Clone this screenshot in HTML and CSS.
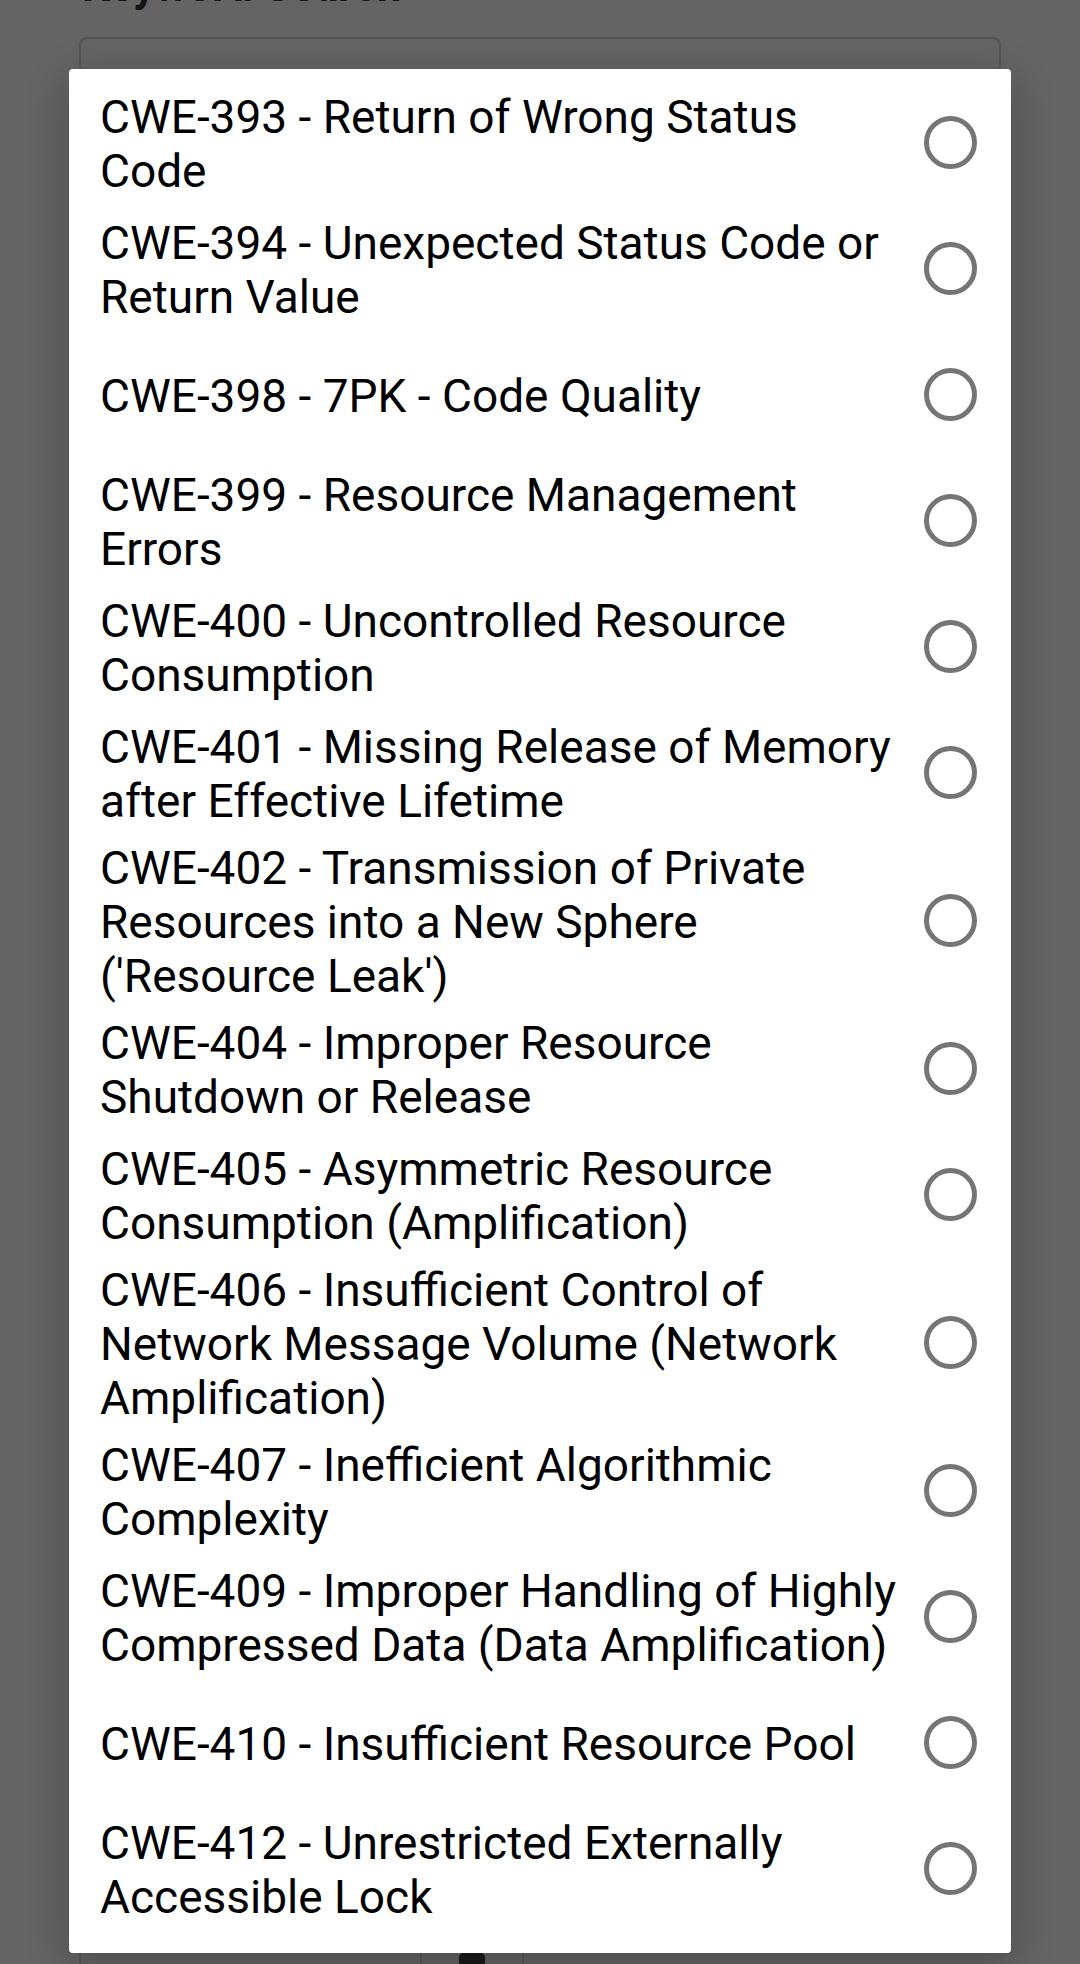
FILE: index.html
```html
<!DOCTYPE html>
<html>
<head>
<meta charset="utf-8">
<link rel="stylesheet" href="styles.css">
</head>
<body>
<div class="page">
  <h2 class="page-title">Keyword Search</h2>
  <div class="search-box"></div>
  <div class="spacer"></div>
  <div class="bottom-bar">
    <div class="bb-cell bb-left"></div>
    <div class="bb-cell bb-mid"><span class="bb-icon"></span></div>
    <div class="bb-cell bb-right"></div>
  </div>
</div>

<div class="dialog">
  <ul class="choice-list">
    <li class="choice"><span class="label">CWE-393 - Return of Wrong Status Code</span><span class="radio"></span></li>
    <li class="choice"><span class="label">CWE-394 - Unexpected Status Code or Return Value</span><span class="radio"></span></li>
    <li class="choice"><span class="label">CWE-398 - 7PK - Code Quality</span><span class="radio"></span></li>
    <li class="choice"><span class="label">CWE-399 - Resource Management Errors</span><span class="radio"></span></li>
    <li class="choice"><span class="label">CWE-400 - Uncontrolled Resource Consumption</span><span class="radio"></span></li>
    <li class="choice"><span class="label">CWE-401 - Missing Release of Memory after Effective Lifetime</span><span class="radio"></span></li>
    <li class="choice"><span class="label">CWE-402 - Transmission of Private Resources into a New Sphere ('Resource Leak')</span><span class="radio"></span></li>
    <li class="choice"><span class="label">CWE-404 - Improper Resource Shutdown or Release</span><span class="radio"></span></li>
    <li class="choice"><span class="label">CWE-405 - Asymmetric Resource Consumption (Amplification)</span><span class="radio"></span></li>
    <li class="choice"><span class="label">CWE-406 - Insufficient Control of Network Message Volume (Network Amplification)</span><span class="radio"></span></li>
    <li class="choice"><span class="label">CWE-407 - Inefficient Algorithmic Complexity</span><span class="radio"></span></li>
    <li class="choice"><span class="label">CWE-409 - Improper Handling of Highly Compressed Data (Data Amplification)</span><span class="radio"></span></li>
    <li class="choice"><span class="label">CWE-410 - Insufficient Resource Pool</span><span class="radio"></span></li>
    <li class="choice"><span class="label">CWE-412 - Unrestricted Externally Accessible Lock</span><span class="radio"></span></li>
  </ul>
</div>
</body>
</html>
```

FILE: styles.css
```css
html, body {
  margin: 0;
  padding: 0;
}

body {
  width: 1080px;
  height: 1964px;
  overflow: hidden;
  background: #666666;
  font-family: Roboto, "Noto Sans", "Liberation Sans", sans-serif;
  position: relative;
}

/* dimmed page behind the dialog */
.page {
  height: 1964px;
  display: flex;
  flex-direction: column;
  padding: 0 79px;
  box-sizing: border-box;
  background: #646464;
}

.page-title {
  margin: -40px 0 0 3px;
  font-size: 44px;
  line-height: 52px;
  font-weight: 700;
  color: #141414;
}

.search-box {
  margin-top: 25px;
  height: 120px;
  border: 2px solid #575757;
  border-radius: 8px;
}

.spacer {
  flex: 1;
}

.bottom-bar {
  display: flex;
  height: 40px;
  margin-bottom: -28px;
}

.bb-cell {
  border-left: 2px solid #575757;
}

.bb-left {
  width: 339px;
}

.bb-mid {
  width: 100px;
  display: flex;
  justify-content: center;
}

.bb-right {
  flex: 1;
}

.bb-icon {
  width: 26px;
  height: 26px;
  background: #1a1a1a;
  border-radius: 6px 6px 0 0;
}

/* dialog overlay */
.dialog {
  position: absolute;
  left: 69px;
  top: 69px;
  width: 942px;
  height: 1884px;
  background: #ffffff;
  border-radius: 4px;
  box-shadow: 0 10px 40px rgba(0, 0, 0, 0.25);
}

.choice-list {
  list-style: none;
  margin: 0;
  padding: 10px 0 22px;
}

.choice {
  display: flex;
  align-items: center;
  min-height: 126px;
  box-sizing: border-box;
  padding: 2px 34px 2px 31px;
}

.label {
  flex: 1;
  padding-top: 4px;
  font-size: 46px;
  line-height: 54px;
  color: #000000;
}

.radio {
  flex: none;
  width: 53px;
  height: 53px;
  margin-left: 21px;
  box-sizing: border-box;
  border: 5px solid #757575;
  border-radius: 50%;
}
```
